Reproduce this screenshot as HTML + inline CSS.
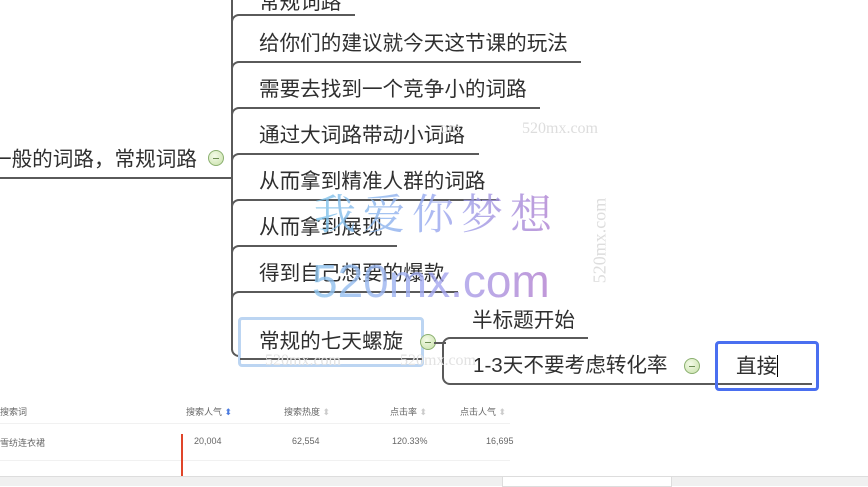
<!DOCTYPE html>
<html><head><meta charset="utf-8"><style>
body{margin:0;width:868px;height:485px;overflow:hidden;background:#fff;position:relative;font-family:"Liberation Sans","Noto Sans CJK SC",sans-serif;color:#333}
.a{position:absolute}
.t{position:absolute;font-size:20.6px;line-height:24px;white-space:nowrap;color:#2f2f2f}
.h{position:absolute;height:2px;background:#5a5a5a}
.c{position:absolute;width:16px;height:16px;border-radius:50%;border:1px solid #8bb070;background:radial-gradient(circle at 40% 35%,#f4fbe8,#c7e0a8);box-sizing:border-box}
.c:after{content:"";position:absolute;left:4px;right:4px;top:6.5px;height:1.5px;background:#6e8e55}
.corner{position:absolute;border-left:2px solid #5a5a5a;border-top:2px solid #5a5a5a;border-top-left-radius:8px;width:10px;height:10px}
.sm{position:absolute;font-size:9px;color:#666;white-space:nowrap}
</style></head><body>
<div class="t" style="left:-9px;top:148px">一般的词路，常规词路</div>
<div class="c" style="left:208px;top:150px"></div>
<div class="h" style="left:0;top:177px;width:233px"></div>
<div class="a" style="left:231px;top:0;width:2px;height:350px;background:#5a5a5a"></div>
<div class="a" style="left:231px;top:345px;width:10px;height:12px;border-left:2px solid #5a5a5a;border-bottom:2px solid #5a5a5a;border-bottom-left-radius:8px;box-sizing:border-box"></div>

<div class="t" style="left:259px;top:-9px">常规词路</div>
<div class="h" style="left:240px;top:14px;width:115px"></div>
<div class="corner" style="left:231px;top:14px"></div>
<div class="t" style="left:259px;top:32px">给你们的建议就今天这节课的玩法</div>
<div class="h" style="left:240px;top:61px;width:341px"></div>
<div class="corner" style="left:231px;top:61px"></div>
<div class="t" style="left:259px;top:78px">需要去找到一个竞争小的词路</div>
<div class="h" style="left:240px;top:107px;width:300px"></div>
<div class="corner" style="left:231px;top:107px"></div>
<div class="t" style="left:259px;top:124px">通过大词路带动小词路</div>
<div class="h" style="left:240px;top:153px;width:239px"></div>
<div class="corner" style="left:231px;top:153px"></div>
<div class="t" style="left:259px;top:170px">从而拿到精准人群的词路</div>
<div class="h" style="left:240px;top:199px;width:259px"></div>
<div class="corner" style="left:231px;top:199px"></div>
<div class="t" style="left:259px;top:216px">从而拿到展现</div>
<div class="h" style="left:240px;top:245px;width:157px"></div>
<div class="corner" style="left:231px;top:245px"></div>
<div class="t" style="left:259px;top:262px">得到自己想要的爆款</div>
<div class="h" style="left:240px;top:291px;width:218px"></div>
<div class="corner" style="left:231px;top:291px"></div>

<div class="a" style="left:238px;top:317px;width:186px;height:50px;border:3px solid #bcd5f2;border-radius:4px;box-sizing:border-box"></div>
<div class="t" style="left:259px;top:330px">常规的七天螺旋</div>
<div class="h" style="left:240px;top:358px;width:182px"></div>
<div class="c" style="left:420px;top:334px"></div>
<div class="h" style="left:434px;top:342px;width:12px"></div>

<div class="t" style="left:472px;top:309px">半标题开始</div>
<div class="h" style="left:452px;top:337px;width:136px"></div>
<div class="a" style="left:442px;top:337px;width:12px;height:48px;border:2px solid #5a5a5a;border-right:none;border-radius:8px 0 0 8px;box-sizing:border-box"></div>
<div class="t" style="left:473px;top:354px">1-3天不要考虑转化率</div>
<div class="c" style="left:684px;top:358px"></div>
<div class="h" style="left:452px;top:383px;width:360px"></div>
<div class="a" style="left:715px;top:341px;width:104px;height:50px;border:3px solid #4a6ff0;border-radius:4px;box-sizing:border-box"></div>
<div class="t" style="left:736px;top:355px">直接<span style="display:inline-block;width:1px;height:22px;background:#000;vertical-align:-4px"></span></div>

<div class="a" style="left:522px;top:120px;font-family:'Liberation Serif',serif;font-size:16px;color:#ddd">520mx.com</div>
<div class="a" style="left:440px;top:120px;font-family:'Liberation Serif',serif;font-size:16px;color:#e4e4e4">om</div>
<div class="a" style="opacity:.8;left:314px;top:182px;font-family:'Noto Serif CJK SC',serif;font-size:42px;letter-spacing:7px;background:linear-gradient(90deg,#7cc4ea,#9aa8f0,#b07fd0);-webkit-background-clip:text;color:transparent">我爱你梦想</div>
<div class="a" style="opacity:.8;left:312px;top:254px;font-size:46px;font-family:'Liberation Sans',sans-serif;background:linear-gradient(90deg,#8ec6ee,#a4a9f2,#b27ecf);-webkit-background-clip:text;color:transparent">520mx.com</div>
<div class="a" style="left:540px;top:230px;transform:rotate(-90deg);transform-origin:center;font-family:'Liberation Serif',serif;font-size:18px;color:#ddd;width:120px;text-align:center">520mx.com</div>
<div class="a" style="left:265px;top:352px;font-family:'Liberation Serif',serif;font-size:16px;color:#e2e2e2">520mx.com</div>
<div class="a" style="left:400px;top:352px;font-family:'Liberation Serif',serif;font-size:16px;color:#e2e2e2">520mx.com</div>

<div class="sm" style="left:0;top:405px">搜索词</div>
<div class="sm" style="left:186px;top:405px">搜索人气 <span style="color:#4a7adf">⬍</span></div>
<div class="sm" style="left:284px;top:405px">搜索热度 <span style="color:#ccc">⬍</span></div>
<div class="sm" style="left:390px;top:405px">点击率 <span style="color:#ccc">⬍</span></div>
<div class="sm" style="left:460px;top:405px">点击人气 <span style="color:#ccc">⬍</span></div>
<div class="a" style="left:0;top:423px;width:510px;height:1px;background:#f1f1f1"></div>
<div class="sm" style="left:0;top:436px">雪纺连衣裙</div>
<div class="sm" style="left:194px;top:436px">20,004</div>
<div class="sm" style="left:292px;top:436px">62,554</div>
<div class="sm" style="left:392px;top:436px">120.33%</div>
<div class="sm" style="left:486px;top:436px">16,695</div>
<div class="a" style="left:0;top:460px;width:510px;height:1px;background:#f1f1f1"></div>
<div class="a" style="left:181px;top:434px;width:2px;height:42px;background:#e0452a"></div>
<div class="a" style="left:0;top:476px;width:868px;height:9px;background:#f0f0f0;border-top:1px solid #ddd"></div>
<div class="a" style="left:502px;top:476px;width:168px;height:9px;background:#fff;border:1px solid #ddd"></div>
</body></html>
